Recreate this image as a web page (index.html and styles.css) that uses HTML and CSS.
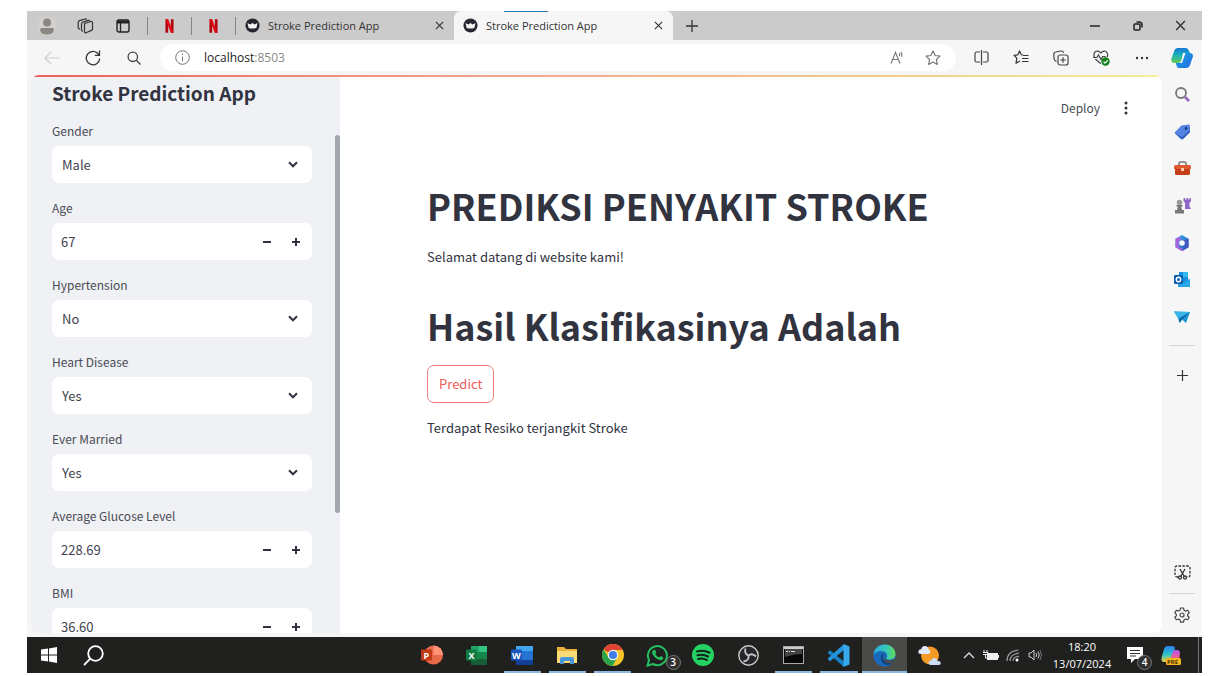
FILE: index.html
```html
<!DOCTYPE html>
<html lang="id">
<head>
<meta charset="utf-8">
<title>Stroke Prediction App</title>
<link rel="stylesheet" href="styles.css">
</head>
<body>
<svg class="defs" aria-hidden="true">
  <defs>
    <symbol id="crown" viewBox="0 0 16 16"><circle cx="8" cy="8" r="7.5" fill="#262730"/><path d="M2.600 5.400 5.700 6.800 8 5.200l2.300 1.600 3.100-1.400-1.300 5.200Q8 12 3.900 10.600z" fill="#f4f4f4"/></symbol>
    <symbol id="netflix" viewBox="0 0 10 16"><path d="M.5.5h3v15h-3zM6.500.5h3v15h-3z" fill="#b1060f"/><path d="M.5.5h3l6 15h-3z" fill="#e50914"/></symbol>
    <symbol id="close" viewBox="0 0 10 10"><path d="m1 1 8 8M9 1 1 9" fill="none" stroke="currentColor" stroke-width="1.3"/></symbol>
    <symbol id="plus" viewBox="0 0 14 14"><path d="M7 1v12M1 7h12" fill="none" stroke="currentColor" stroke-width="1.3"/></symbol>
    <linearGradient id="cpA" x1="0" y1="0" x2="0" y2="1"><stop offset="0" stop-color="#1577d8"/><stop offset=".5" stop-color="#1bb5b5"/><stop offset="1" stop-color="#6cc84f"/></linearGradient>
    <linearGradient id="cpB" x1="0" y1="0" x2="1" y2="1"><stop offset="0" stop-color="#18a8e8"/><stop offset="1" stop-color="#2469dc"/></linearGradient>
    <linearGradient id="cpC" x1="0" y1="0" x2="0" y2="1"><stop offset="0" stop-color="#2f7cf0"/><stop offset=".5" stop-color="#26c2d0"/><stop offset="1" stop-color="#f1d03b"/></linearGradient>
    <linearGradient id="cpD" x1="0" y1="0" x2="0" y2="1"><stop offset="0" stop-color="#a45af0"/><stop offset=".6" stop-color="#ef5a9b"/><stop offset="1" stop-color="#f79a3c"/></linearGradient>
    <linearGradient id="edA" x1="0" y1="0" x2="1" y2="0"><stop offset="0" stop-color="#28a9e2"/><stop offset=".6" stop-color="#36c9b4"/><stop offset="1" stop-color="#63d957"/></linearGradient>
    <linearGradient id="m3" x1="0" y1="0" x2="1" y2="1"><stop offset="0" stop-color="#2fb5ea"/><stop offset="1" stop-color="#304ec0"/></linearGradient>
  </defs>
</svg>

<div class="window">
  <header class="tabbar">
    <div class="tab-tools">
      <button class="icon-btn w38" aria-label="Profil"><svg width="20" height="20" viewBox="0 0 20 20"><circle cx="10" cy="10" r="9.500" fill="#d4d0cc"/><circle cx="10" cy="6.500" r="4" fill="#8b8682"/><path d="M3 14q0-2 2-2h10q2 0 2 2-1 4.500-7 4.500T3 14z" fill="#8b8682"/></svg></button>
      <button class="icon-btn w38" aria-label="Ruang kerja"><svg width="17" height="16" viewBox="0 0 17 16" fill="none" stroke="#333" stroke-width="1.200" stroke-linejoin="round"><path d="m7.500 5.500 6.500-2q1.500-.2 1.500 1V11q0 1-1 1.400L9 14.800q-1.500.4-1.500-1.200z"/><path d="M6 12.800q-1.500.4-1.500-1.200V6q0-1.500 1.300-1.900l5.700-1.700q1-.2 1.300.8"/><path d="M3 11Q1 11 1.200 9V4.500q0-1.500 1.300-1.900L8 1q1.200-.3 1.700.6"/></svg></button>
      <button class="icon-btn w38" aria-label="Tab vertikal"><svg width="14" height="14" viewBox="0 0 14 14"><rect x="1" y="1" width="12" height="12" rx="2" fill="none" stroke="#222" stroke-width="1.400"/><path d="M1 1.500h12V4.500H1z" fill="#222"/><path d="M4.500 4v9" stroke="#222" stroke-width="1.300"/></svg></button>
    </div>
    <i class="tab-sep"></i>
    <a class="pin" href="#" aria-label="Netflix"><svg width="9" height="16"><use href="#netflix"/></svg></a>
    <i class="tab-sep"></i>
    <a class="pin" href="#" aria-label="Netflix"><svg width="9" height="16"><use href="#netflix"/></svg></a>
    <i class="tab-sep"></i>
    <div class="tab">
      <svg width="15" height="15"><use href="#crown"/></svg><span>Stroke Prediction App</span>
      <button class="icon-btn" aria-label="Tutup tab"><svg width="9" height="9"><use href="#close"/></svg></button>
    </div>
    <div class="tab tab-active">
      <svg width="15" height="15"><use href="#crown"/></svg><span>Stroke Prediction App</span>
      <button class="icon-btn" aria-label="Tutup tab"><svg width="9" height="9"><use href="#close"/></svg></button>
    </div>
    <button class="icon-btn w38" aria-label="Tab baru"><svg width="14" height="14"><use href="#plus"/></svg></button>
    <div class="win-controls">
      <button class="icon-btn" aria-label="Minimalkan"><svg width="10" height="10" viewBox="0 0 10 10"><path d="M0 5h10" stroke="#222" stroke-width="1.500"/></svg></button>
      <button class="icon-btn" aria-label="Pulihkan"><svg width="10" height="10" viewBox="0 0 10 10" fill="none" stroke="#222" stroke-width="1.500"><rect x="1" y="3" width="6" height="6" rx="1"/><path d="M3.500 1H6q3 0 3 3v2.500"/></svg></button>
      <button class="icon-btn" aria-label="Tutup"><svg width="11" height="11"><use href="#close"/></svg></button>
    </div>
  </header>

  <nav class="toolbar">
    <div class="nav-buttons">
      <button class="icon-btn" aria-label="Kembali"><svg width="16" height="14" viewBox="0 0 16 14" fill="none" stroke="#cfcfcf" stroke-width="1.200"><path d="M16 7H1M7 1 1 7l6 6"/></svg></button>
      <button class="icon-btn" aria-label="Muat ulang"><svg width="16" height="16" viewBox="0 0 16 16" fill="none" stroke="#333" stroke-width="1.300"><path d="M14.700 8.500A6.700 6.700 0 1 1 13.300 4L14.500 5.200M14.500.5v4.800H9.800"/></svg></button>
      <button class="icon-btn" aria-label="Cari"><svg width="14" height="14" viewBox="0 0 14 14" fill="none" stroke="#444" stroke-width="1.300"><circle cx="5.800" cy="5.800" r="4.700"/><path d="m9.300 9.300 4.200 4.200"/></svg></button>
    </div>
    <div class="address">
      <svg width="15" height="15" viewBox="0 0 15 15" fill="none" stroke="#777"><circle cx="7.500" cy="7.500" r="6.800"/><path d="M7.500 6.500v4.800M7.500 3.500v1.500"/></svg>
      <span class="url"><b>localhost</b>:8503</span>
      <button class="icon-btn" aria-label="Baca keras"><svg width="15" height="15" viewBox="0 0 15 15" fill="none" stroke="#777" stroke-width="1.100"><path d="m1 13.500 4.500-11 4.500 11M2.700 9.500h5.600M9 3.200q1 1.300.6 3M10.800 1.900q1.800 2.200 1 5"/></svg></button>
      <button class="icon-btn" aria-label="Favorit"><svg width="16" height="16" viewBox="0 0 16 16" fill="none" stroke="#777" stroke-width="1.200" stroke-linejoin="round"><path d="m8 1 2.100 4.500 4.900.6-3.600 3.400.9 4.900L8 12l-4.300 2.400.9-4.900L1 6.100l4.900-.6z"/></svg></button>
    </div>
    <div class="tool-buttons">
      <button class="icon-btn" aria-label="Layar terpisah"><svg width="15" height="15" viewBox="0 0 15 15" fill="none" stroke="#444" stroke-width="1.200"><path d="M6 2H2.500Q1 2 1 3.500v7Q1 12 2.500 12H6M9 2h3.500Q14 2 14 3.500v7q0 1.500-1.500 1.500H9M7.500 0v15"/></svg></button>
      <button class="icon-btn" aria-label="Daftar favorit"><svg width="16" height="15" viewBox="0 0 16 15" fill="none" stroke="#333" stroke-width="1.200" stroke-linejoin="round"><path d="M9.800 5 8.300 4.700 6.500 1 4.800 4.800 1 5.400l2.800 2.800L3 13.300l4-2.400M10 5.500h5.500M9 8.500h6.500M9 11.500h6.500"/></svg></button>
      <button class="icon-btn" aria-label="Koleksi"><svg width="16" height="16" viewBox="0 0 16 16" fill="none" stroke="#444" stroke-width="1.200"><rect x="5" y="5" width="10" height="10" rx="2"/><path d="M10 7.200v5.600M7.200 10h5.600M3.500 11.500 2.300 10.800Q1 10 1 8L.8 4.500Q.8 2.200 2.700 2L8 1q2-.2 2.700 1.800"/></svg></button>
      <button class="icon-btn" aria-label="Esensial browser"><svg width="17" height="16" viewBox="0 0 17 16" fill="none" stroke="#444" stroke-width="1.200"><path d="M1.500 7.500Q-.2 3 3 1.300 6 .3 7.800 3 9.800.3 12.500 1.300q3.200 1.700 1.700 5.700M0 7.500h4L5.500 5 8 9.500l1.700-3h3M2.300 9l5.500 4.700"/><circle cx="12.500" cy="11.500" r="4.200" fill="#16801c" stroke="none"/><path d="m10.500 11.600 1.500 1.500 2.700-2.800" stroke="#fff"/></svg></button>
      <button class="icon-btn" aria-label="Lainnya"><svg width="14" height="4" viewBox="0 0 14 4" fill="#333"><circle cx="2" cy="2" r="1.200"/><circle cx="7" cy="2" r="1.200"/><circle cx="12" cy="2" r="1.200"/></svg></button>
      <button class="icon-btn" aria-label="Copilot"><svg width="22" height="20" viewBox="0 0 22 20"><path d="M7 0h8q2 0 2.700 2.500L19 5h-5L9 15H3Q0 15 .3 11L3.200 3Q4.200 0 7 0z" fill="url(#cpA)"/><path d="M13 5h6q3.500 0 2.800 4L19 17q-1 3-4 3H8q-2 0-2.500-2.500L4.800 15H8q2-.5 2.700-3z" fill="url(#cpB)"/><path d="M12 5h2.500L11 15H8q2-.5 2.500-3z" fill="#f5fafd"/></svg></button>
    </div>
  </nav>

  <div class="workspace">
    <div class="app">
      <div class="decoration"></div>
      <aside class="sidebar">
        <h2>Stroke Prediction App</h2>
        <form class="fields">
          <div class="field"><label for="gender">Gender</label>
            <div class="control"><select id="gender"><option>Male</option><option>Female</option></select><svg class="chev" width="10" height="7" viewBox="0 0 10 7"><path d="m1 1.300 4 4 4-4"/></svg></div></div>
          <div class="field"><label for="age">Age</label>
            <div class="control"><input id="age" type="text" value="67"><button type="button" aria-label="Kurangi"><svg width="8" height="8" viewBox="0 0 8 8"><path d="M0 4h8"/></svg></button><button type="button" aria-label="Tambah"><svg width="8" height="8" viewBox="0 0 8 8"><path d="M0 4h8M4 0v8"/></svg></button></div></div>
          <div class="field"><label for="hyper">Hypertension</label>
            <div class="control"><select id="hyper"><option>No</option><option>Yes</option></select><svg class="chev" width="10" height="7" viewBox="0 0 10 7"><path d="m1 1.300 4 4 4-4"/></svg></div></div>
          <div class="field"><label for="heart">Heart Disease</label>
            <div class="control"><select id="heart"><option>Yes</option><option>No</option></select><svg class="chev" width="10" height="7" viewBox="0 0 10 7"><path d="m1 1.300 4 4 4-4"/></svg></div></div>
          <div class="field"><label for="married">Ever Married</label>
            <div class="control"><select id="married"><option>Yes</option><option>No</option></select><svg class="chev" width="10" height="7" viewBox="0 0 10 7"><path d="m1 1.300 4 4 4-4"/></svg></div></div>
          <div class="field"><label for="glucose">Average Glucose Level</label>
            <div class="control"><input id="glucose" type="text" value="228.69"><button type="button" aria-label="Kurangi"><svg width="8" height="8" viewBox="0 0 8 8"><path d="M0 4h8"/></svg></button><button type="button" aria-label="Tambah"><svg width="8" height="8" viewBox="0 0 8 8"><path d="M0 4h8M4 0v8"/></svg></button></div></div>
          <div class="field"><label for="bmi">BMI</label>
            <div class="control"><input id="bmi" type="text" value="36.60"><button type="button" aria-label="Kurangi"><svg width="8" height="8" viewBox="0 0 8 8"><path d="M0 4h8"/></svg></button><button type="button" aria-label="Tambah"><svg width="8" height="8" viewBox="0 0 8 8"><path d="M0 4h8M4 0v8"/></svg></button></div></div>
        </form>
        <div class="thumb"></div>
      </aside>
      <main class="main">
        <div class="app-header">
          <button type="button">Deploy</button>
          <button type="button" aria-label="Menu"><svg width="4" height="14" viewBox="0 0 4 14" fill="#31333f"><circle cx="2" cy="2" r="1.500"/><circle cx="2" cy="7" r="1.500"/><circle cx="2" cy="12" r="1.500"/></svg></button>
        </div>
        <div class="content">
          <h1>PREDIKSI PENYAKIT STROKE</h1>
          <p>Selamat datang di website kami!</p>
          <h1>Hasil Klasifikasinya Adalah</h1>
          <button class="predict" type="button">Predict</button>
          <p>Terdapat Resiko terjangkit Stroke</p>
        </div>
      </main>
    </div>
    <aside class="rail">
      <button class="icon-btn" aria-label="Cari"><svg width="17" height="17" viewBox="0 0 17 17" fill="none" stroke="#777" stroke-width="1.800"><circle cx="7" cy="7" r="5"/><path d="m11 11 4 4" stroke="#9a62b8" stroke-width="2.500"/></svg></button>
      <button class="icon-btn" aria-label="Belanja"><svg width="17" height="16" viewBox="0 0 17 16"><path d="M1 8 7.500 1.500 14.500.5Q16 .5 16 2v6L9 15q-1.200 1-2.500-.3L1 9.500q-.7-.8 0-1.500z" fill="#5584e0"/><path d="m1 9 6.500 6q1 .5 1.800-.2L16 8V6L8 13z" fill="#315fc2"/><circle cx="12" cy="4.500" r="1.400" fill="#163a88"/></svg></button>
      <button class="icon-btn" aria-label="Alat"><svg width="17" height="15" viewBox="0 0 17 15"><path d="M5 4V2.500Q5 1 6.500 1h4Q12 1 12 2.500V4" fill="none" stroke="#777" stroke-width="1.600"/><path d="M1.500 4h14Q17 4 17 5.500V8H0V5.500Q0 4 1.500 4z" fill="#e0592f"/><path d="M1 8h15v4.500q0 1.500-1.500 1.500h-12Q1 14 1 12.500z" fill="#c43e17"/><path d="M7 7h3v3H7z" fill="#ffd0b0"/></svg></button>
      <button class="icon-btn" aria-label="Permainan"><svg width="17" height="16" viewBox="0 0 17 16"><circle cx="5.500" cy="4.500" r="2.800" fill="#999"/><path d="M2.500 7h6v1.500H7.200L8 12h2v3.500H1V12h2l.8-3.500H2.500z" fill="#777"/><path d="M9.500 0h1.600v1.500h1.500V0h1.600v1.500h1.300V0H17v3.500l-1.500 1v4L17 11h-6V4.500l-1.500-1z" fill="#9066ca"/></svg></button>
      <button class="icon-btn" aria-label="Microsoft 365"><svg width="16" height="16" viewBox="0 0 16 16"><path d="M8 0 14.500 3.800v8.400L8 16l-6.500-3.800V3.800z" fill="url(#m3)"/><path d="M1.500 3.800 6 1.500l1 3-2.300 2v5l3.300 2 2 2-2 .5-6.500-3.800z" fill="#ad62dc"/><path d="m7 4.500 4 1 3.500-1.700v8.400L10 15l1.500-5z" fill="#4356c4"/><circle cx="8" cy="8" r="2.800" fill="#f7f7f7"/></svg></button>
      <button class="icon-btn" aria-label="Outlook"><svg width="16" height="15" viewBox="0 0 16 15"><path d="M5 0h9v8l2-1v8H4z" fill="#1a8fdb"/><path d="M9 0h5v5H9z" fill="#35b9ee"/><path d="m4 14 12-7v8H4z" fill="#26a7e8"/><rect y="3" width="9" height="9" rx="1" fill="#0a5fae"/><circle cx="4.500" cy="7.500" r="2.200" fill="none" stroke="#fff" stroke-width="1.400"/></svg></button>
      <button class="icon-btn" aria-label="Drop"><svg width="16" height="12" viewBox="0 0 16 12"><path d="M0 .5 16 1l-4 11-4-3.500L5.500 12 4 7z" fill="#1c94d2"/><path d="M16 1 4 7 0 .5z" fill="#38b7ea"/><path d="M16 1 5.500 8v4L8 8.500z" fill="#0b5e9c"/></svg></button>
      <hr>
      <button class="icon-btn" aria-label="Tambah"><svg width="13" height="13"><use href="#plus"/></svg></button>
      <span class="rail-space"></span>
      <button class="icon-btn" aria-label="Cuplikan layar"><svg width="17" height="15" viewBox="0 0 17 15" fill="none" stroke="#333" stroke-width="1.300"><path d="M4 12H3q-2 0-2-2V3q0-2 2-2h11q2 0 2 2v7q0 2-2 2h-1" stroke-dasharray="2.500 1.300"/><path d="m6 4 4 7M11 4l-4 7"/><circle cx="6" cy="12.500" r="1.500"/><circle cx="11" cy="12.500" r="1.500"/></svg></button>
      <hr>
      <button class="icon-btn" aria-label="Pengaturan"><svg width="16" height="16" viewBox="0 0 16 16" fill="none" stroke="#444" stroke-width="1.200" stroke-linejoin="round"><path d="M6.500 1h3l.5 2.200 1.500.9 2.200-.8 1.500 2.600-1.600 1.500v1.300l1.600 1.500-1.500 2.600-2.200-.8-1.500.9-.5 2.200h-3L6 12.900 4.500 12l-2.200.8L.8 10.200l1.600-1.500V7.400L.8 5.900l1.500-2.600 2.200.8L6 3.200z"/><circle cx="8" cy="8" r="2"/></svg></button>
    </aside>
  </div>

  <footer class="taskbar">
    <div class="start">
      <button class="icon-btn" aria-label="Mulai"><svg width="16" height="16" viewBox="0 0 16 16" fill="#fff"><path d="m0 2.500 7-1v6H0zM8 1.400 16 0v7.500H8zM0 8.500h7v6l-7-1zM8 8.500h8V16l-8-1.400z"/></svg></button>
      <button class="icon-btn" aria-label="Cari"><svg width="21" height="21" viewBox="0 0 21 21" fill="none" stroke="#fff" stroke-width="1.800"><circle cx="12.500" cy="8.500" r="7.300"/><path d="m7.300 13.700-6.300 6.300"/></svg></button>
    </div>
    <div class="apps">
      <button aria-label="PowerPoint"><svg width="22" height="20" viewBox="0 0 22 20"><circle cx="12.500" cy="10" r="9.500" fill="#e8694a"/><path d="M12.500.5A9.500 9.500 0 0 1 22 10h-9.500z" fill="#ff9275"/><rect y="4.500" width="11" height="11" rx="1" fill="#c13b1b"/><text x="2.500" y="13.500">P</text></svg></button>
      <button aria-label="Excel"><svg width="22" height="20" viewBox="0 0 22 20"><path d="M5 1h16v19H5z" fill="#16874a"/><path d="M13 1h8v6h-8z" fill="#33c481"/><path d="M5 1h8v6H5z" fill="#21a366"/><path d="M5 14h16v6H5z" fill="#155c37"/><rect y="4.500" width="11" height="11" rx="1" fill="#107c41"/><text x="2.500" y="13.500">X</text></svg></button>
      <button class="open" aria-label="Word"><svg width="22" height="20" viewBox="0 0 22 20"><path d="M5 1h17v19H5z" fill="#2573d2"/><path d="M5 1h17v5H5z" fill="#41a5ee"/><path d="M5 15h17v5H5z" fill="#133f94"/><rect y="4.500" width="11" height="11" rx="1" fill="#1859be"/><text x="1" y="13.500">W</text></svg></button>
      <button class="open" aria-label="Explorer"><svg width="20" height="17" viewBox="0 0 20 17"><path d="M0 0h7l2 2h11v14H0z" fill="#e9b13c"/><path d="M0 4h20v12H0z" fill="#f9dc78"/><path d="M3 17v-5q0-2 2-2h10q2 0 2 2v5h-4v-3H7v3z" fill="#4696d8"/></svg></button>
      <button class="open" aria-label="Chrome"><svg width="22" height="22" viewBox="0 0 22 22"><circle cx="11" cy="11" r="11" fill="#f6c529"/><path d="M11 11 1.500 5.500A11 11 0 0 1 20.500 5.500L20.700 6H11z" fill="#de4335"/><path d="M1.500 5.500A11 11 0 0 0 10.500 22L15.300 13.500 11 16 6.500 13.500z" fill="#2ba24c"/><circle cx="11" cy="11" r="5.200" fill="#fff"/><circle cx="11" cy="11" r="4.100" fill="#3f7de8"/></svg></button>
      <button class="has-badge" aria-label="WhatsApp"><svg width="23" height="23" viewBox="0 0 23 23"><path d="M1.500 21.500 3 16A9.500 9.500 0 1 1 7 20z" fill="none" stroke="#25bf61" stroke-width="2"/><path d="M7.500 6q1.500-.8 2 .5l.8 2-1 1.400q1.300 2.600 4 3.600l1.300-1.400 2.500 1.200q.6 2.500-2.600 3-3-.2-5.800-3Q5.400 9.500 6.200 7.500z" fill="#25bf61"/></svg><span class="badge">3</span></button>
      <button aria-label="Spotify"><svg width="22" height="22" viewBox="0 0 22 22" fill="none" stroke="#15211a" stroke-width="2" stroke-linecap="round"><circle cx="11" cy="11" r="11" fill="#25d162" stroke="none"/><path d="M5 7.500q6.500-1.800 12.500 1.200M5.500 11.300q5.500-1.500 10.500 1.200M6 15q4.500-1.300 8.800 1"/></svg></button>
      <button aria-label="OBS"><svg width="21" height="21" viewBox="0 0 21 21"><circle cx="10.500" cy="10.500" r="9.700" fill="#25252b" stroke="#c9c9c9" stroke-width="1.400"/><path d="M10.500 10.500Q6 9 7.500 3.500M10.500 10.500Q14 7.500 18 11.500M10.500 10.500q1 5-5 6" fill="none" stroke="#c9c9c9" stroke-width="1.800"/></svg></button>
      <button class="open" aria-label="Terminal"><svg width="21" height="18" viewBox="0 0 21 18"><rect x=".5" y=".5" width="20" height="17" fill="#090909" stroke="#aaa"/><path d="M1 1h19v2H1z" fill="#ccc"/><path d="M2 3h17v5q-9 0-17 3z" fill="#444"/><path d="M3 5.500h2M6 5.500h1M8 5.500h4" stroke="#ddd"/></svg></button>
      <button class="open" aria-label="VS Code"><svg width="23" height="23" viewBox="0 0 23 23"><path d="m1 8 2-1.700L17 17.500V23L1.300 9.500z" fill="#1580c6"/><path d="m1 15.500 2 1.700L17 6V0L1.300 14z" fill="#2394dc"/><path d="m16.500 0 6 2.500v18l-6 2.500z" fill="#36a8ee"/></svg></button>
      <button class="open current" aria-label="Edge"><svg width="23" height="23" viewBox="0 0 23 23"><circle cx="11.500" cy="11.500" r="11" fill="#1969bd"/><path d="M.5 11.500C1 4 6 .5 11.500.5c7 0 11 5 11 9.500 0 4-3 5.500-6 5.500-3.500 0-3.500-1.300-2.500-2.500C15 10 12 7 8 7 4 7 1 9.500.5 11.500z" fill="url(#edA)"/><path d="M8 12q-1.300 6.500 5.500 9 4.500.5 7.200-4-5.200 2.500-8.700.3T10 12q.2-2 1.500-2.700Q9 9 8 12z" fill="#12427c"/><path d="M11.500 11.500q-.8 3 2.500 4.500 4.500 1.200 8-1l1 1.500-1.500 1.500q-5 2.500-8.500.3-3.300-3-1.500-6.800z" fill="#4a4b49"/></svg></button>
      <button aria-label="Cuaca"><svg width="23" height="21" viewBox="0 0 23 21"><circle cx="12" cy="10.500" r="9" fill="#f59a23"/><path d="M3 9Q0 9 .3 6.500.8 4 3.200 4.300 4 .5 7.500 1q3 .5 3 3.500 2 .3 2 2.300T10 9z" fill="#dfe9fa"/><path d="M13 20q-2.500 0-2.500-2.300T13 15.500q.8-3 3.800-2.500 2.500.4 2.700 3 3.300-.3 3.300 2T20.500 20z" fill="#cbdcf5"/></svg></button>
    </div>
    <div class="tray">
      <button class="icon-btn" aria-label="Ikon tersembunyi"><svg width="12" height="7" viewBox="0 0 12 7" fill="none" stroke="#ddd" stroke-width="1.300"><path d="m1 6 5-5 5 5"/></svg></button>
      <button class="icon-btn" aria-label="Baterai"><svg width="16" height="11" viewBox="0 0 16 11"><path d="M4 3h11v7H4z" fill="#eee"/><path d="M15.500 5v3M1 0v2M4 0v2M0 2.500h5v2H0M2.500 4v4H4" fill="none" stroke="#eee"/></svg></button>
      <button class="icon-btn" aria-label="Wi-Fi"><svg width="14" height="13" viewBox="0 0 14 13" fill="none" stroke="#999" stroke-width="1.200"><path d="M1 12Q1 2 12.500 1M4 12q0-7 9-7.800M7 12q0-4 6-4.700"/><circle cx="11" cy="11" r="1.500" fill="#fff" stroke="none"/></svg></button>
      <button class="icon-btn" aria-label="Suara"><svg width="14" height="12" viewBox="0 0 14 12" fill="none" stroke="#ccc"><path d="M1 4h2l3-3v10L3 8H1zM8 4q1.300 2 0 4M10 2.500q2.500 3.500 0 7"/><path d="M12 1q3 5 0 10" stroke="#777"/></svg></button>
      <div class="clock"><time>18:20</time><time>13/07/2024</time></div>
      <button class="icon-btn has-badge notif" aria-label="Notifikasi"><svg width="16" height="16" viewBox="0 0 16 16"><path d="M0 0h16v12H8l-4 4v-4H0z" fill="#fff"/><path d="M3 3.500h10M3 6.500h10M3 9h6" stroke="#333"/></svg><span class="badge">4</span></button>
      <button class="icon-btn pre" aria-label="Copilot"><svg width="20" height="19" viewBox="0 0 20 19"><path d="M6.500 0h5q2.500 0 2.500 2.500L9.500 16H3Q0 16 .5 12L3 3Q4 0 6.500 0z" fill="url(#cpC)"/><path d="M14 4h2q3 0 3 3l-1 8H9l2.500-9q.5-2 2.500-2z" fill="url(#cpD)"/><rect x="5" y="12" width="15" height="7" rx="1.500" fill="#f4b51f"/><text class="pre-text" x="6" y="18">PRE</text></svg></button>
      <i class="peek"></i>
    </div>
  </footer>
</div>
</body>
</html>
```
FILE: styles.css
```css
* { box-sizing: border-box; }
body {
  margin: 0;
  height: 100vh;
  padding: 11px 25px 3px 27px;
  background: #fff;
  font-family: "Noto Sans CJK SC", "Noto Sans CJK JP", sans-serif;
  color: #31333f;
}
.defs { position: absolute; width: 0; height: 0; }
svg { display: block; flex: none; }
button { font: inherit; color: inherit; background: none; border: 0; padding: 0; }
.window { height: 100%; display: flex; flex-direction: column; background: #f6f6f6; overflow: hidden; }
.icon-btn { display: flex; align-items: center; justify-content: center; color: #333; }
.w38 { width: 38px; }

/* Tab strip */
.tabbar {
  flex: none; height: 29px; display: flex; align-items: center;
  background: #cbcbcb; font: 11px/16px "Open Sans", "Noto Sans", sans-serif; color: #333;
}
.tab-tools { display: flex; width: 120px; padding-left: 1px; }
.tab-sep { width: 1px; height: 18px; background: #858585; }
.pin { width: 43px; display: flex; justify-content: center; }
.tab { height: 29px; width: 218px; display: flex; align-items: center; gap: 8px; padding: 0 10px 0 9px; white-space: nowrap; }
.tab .icon-btn { margin-left: auto; }
.tab-active {
  position: relative; width: 219px; background: #f6f6f6;
  border-radius: 7px 7px 0 0;
}
.tab-active::before {
  content: ""; position: absolute; left: 50px; top: 0;
  width: 44px; height: 1px; background: #2377b5;
}
.win-controls { margin-left: auto; display: flex; width: 128px; }
.win-controls .icon-btn { flex: 1; }

/* Toolbar */
.toolbar { flex: none; height: 35px; display: flex; align-items: center; }
.nav-buttons { display: flex; width: 133px; padding: 0 6px 0 4px; }
.nav-buttons .icon-btn { flex: 1; }
.address {
  flex: 1; height: 27px; display: flex; align-items: center;
  padding: 0 15px; border-radius: 14px; background: #fff;
}
.url { flex: 1; padding-left: 14px; font: 12px/18px "Open Sans", "Noto Sans", sans-serif; color: #888; }
.url b { font-weight: 400; color: #222; }
.address .icon-btn + .icon-btn { margin-left: 20px; }
.tool-buttons { display: flex; width: 246px; padding-left: 5px; }
.tool-buttons .icon-btn { flex: 1; }

/* Browser body */
.workspace { flex: 1; min-height: 0; display: flex; padding: 0 0 4px 4px; }
.app {
  position: relative; flex: 1; display: flex; overflow: hidden;
  background: #fff; border-radius: 8px;
}
.decoration {
  position: absolute; z-index: 1; top: 0; left: 0; right: 0; height: 2px;
  background: linear-gradient(90deg, #e9615f, #f3a391 40%, #f0cb8a 75%, #f5ef9b);
}
.sidebar {
  position: relative; flex: none; width: 309px; overflow: hidden;
  background: #eff1f5; padding: 4px 28px 0 21px;
}
.sidebar h2 { margin: 0; font-size: 19px; line-height: 28px; font-weight: 700; white-space: nowrap; }
.fields { display: flex; flex-direction: column; gap: 16px; padding-top: 15px; }
.field { display: flex; flex-direction: column; }
.field label { height: 24px; font-size: 12px; line-height: 18px; color: #4a4c56; }
.control {
  height: 37px; display: flex; align-items: center; background: #fff;
  border-radius: 7px; padding-right: 2px;
}
.control select, .control input {
  appearance: none; flex: 1; min-width: 0; border: 0; background: none; outline: 0;
  font: 13px/20px "Noto Sans CJK SC", "Noto Sans CJK JP", sans-serif; color: #41434e; padding: 0 10px;
}
.control input { padding-left: 9px; }
.control svg { fill: none; stroke: #31333f; stroke-width: 2; }
.chev { margin-right: 12px; }
.control button { width: 29px; height: 37px; display: flex; align-items: center; justify-content: center; }
.thumb {
  position: absolute; right: 0; top: 60px; width: 5px; height: 378px;
  border-radius: 3px; background: #a3a5af;
}
.main { flex: 1; min-width: 0; }
.app-header {
  height: 66px; display: flex; justify-content: flex-end; align-items: center;
  gap: 24px; padding-right: 34px; font-size: 12px; line-height: 18px; color: #4a4c56;
}
.content { padding: 34px 87px 0; font-size: 13px; line-height: 22px; }
.content h1 { margin: 0; font-size: 36px; line-height: 60px; font-weight: 700; white-space: nowrap; }
.content p { margin: 11px 0 27px; }
.predict {
  height: 38px; padding: 0 11px; margin-top: 10px; margin-bottom: 14px; display: block;
  border: 1px solid #f08080; border-radius: 7px; color: #ee5c5c;
}

/* Browser side rail */
.rail { flex: none; width: 40px; display: flex; flex-direction: column; align-items: center; padding-top: 1px; }
.rail .icon-btn { flex: none; height: 37px; width: 40px; }
.rail hr { width: 26px; margin: 10px 0 11px; border: 0; border-top: 1px solid #d5d5d5; }
.rail-space { flex: 1; }
.rail-space ~ hr { margin: 2px 0; }

/* Taskbar */
.taskbar { flex: none; height: 36px; display: flex; background: #20201f; color: #fff; }
.start { width: 382px; display: flex; align-items: center; }
.start .icon-btn { width: 44px; }
.apps { flex: 1; display: grid; grid-template-columns: repeat(12, 1fr); }
.apps button { position: relative; display: flex; align-items: center; justify-content: center; }
.apps .open::after {
  content: ""; position: absolute; left: 4px; right: 4px; bottom: 0; height: 2px; background: #8fb9df;
}
.apps .current { background: #4a4b49; }
.apps .current::after { left: 0; right: 0; }
.apps text { font: 700 9px "Open Sans", sans-serif; fill: #fff; }
.badge {
  position: absolute; right: 0; bottom: 3px; width: 15px; height: 15px;
  border: 1px solid #777; border-radius: 50%; background: #30302f; color: #fff;
  font: 600 10px/13px "Open Sans", sans-serif; text-align: center;
}
.tray { width: 250px; display: flex; align-items: center; padding-left: 6px; }
.tray .icon-btn { width: 22px; height: 36px; }
.clock {
  width: 72px; display: flex; flex-direction: column; align-items: center;
  font: 11px/17px "Open Sans", "Noto Sans", sans-serif; white-space: nowrap;
}
.tray .notif { position: relative; width: 34px; }
.tray .pre { width: 38px; }
.pre-text { font: 700 6px "Open Sans", sans-serif; fill: #4a3300; }
.peek { width: 1px; height: 36px; margin-left: auto; margin-right: 3px; background: #777; }
```
